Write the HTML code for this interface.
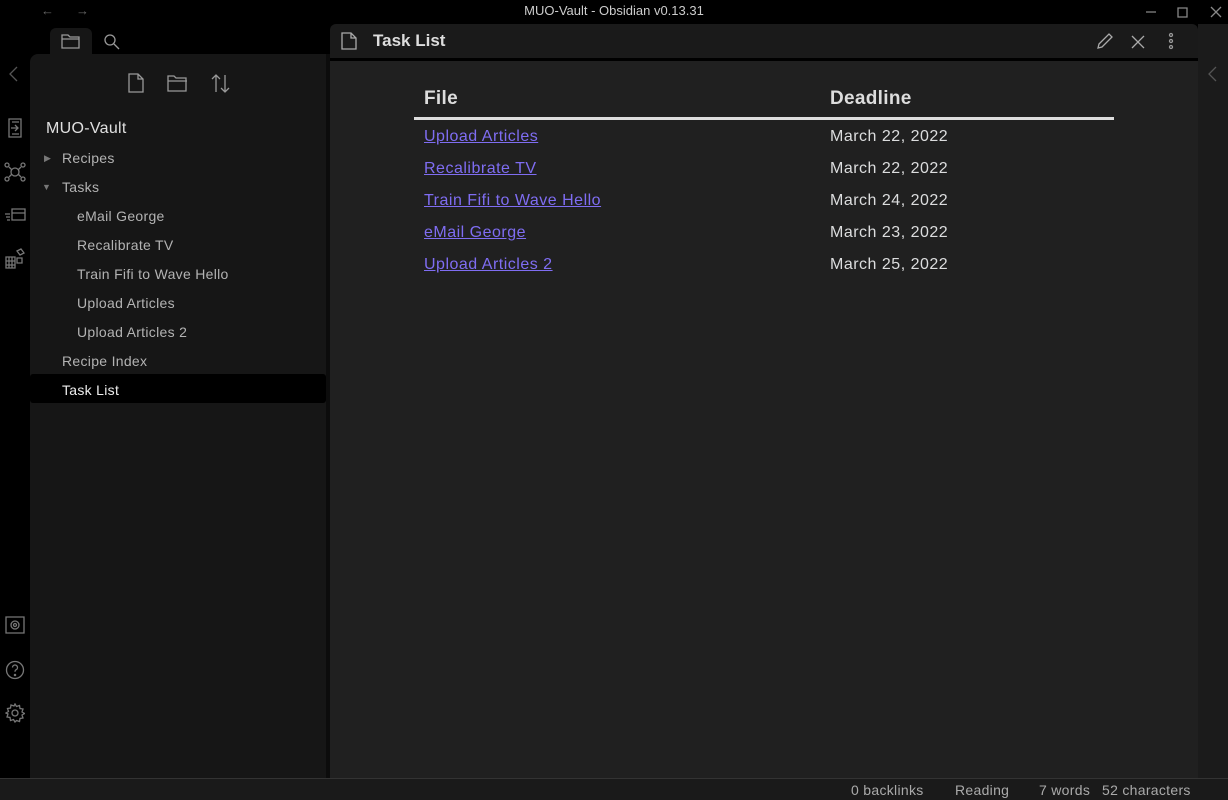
<!DOCTYPE html>
<html><head><meta charset="utf-8"><style>
*{margin:0;padding:0;box-sizing:border-box}
body{width:1228px;height:800px;background:#000;font-family:"Liberation Sans",sans-serif;position:relative;overflow:hidden;color:#dcddde}
.abs{position:absolute}
svg{position:absolute;fill:none;stroke:#999;stroke-width:1.3}
.rib{stroke:#777}
.t{position:absolute;font-size:14px;color:#b3b3b3;white-space:nowrap;letter-spacing:0.3px}
.main a{color:#7f6df2;text-decoration:underline}
.row{position:absolute;font-size:16px;white-space:nowrap;letter-spacing:0.5px}
</style></head><body>
<div class="abs" style="left:0;top:0;width:1228px;height:24px;background:#000"></div>
<div class="abs" style="left:0;top:3px;width:1228px;text-align:center;font-size:13px;color:#ccc">MUO-Vault - Obsidian v0.13.31</div>
<div class="abs" style="left:41px;top:3px;font-size:13px;color:#666">←</div>
<div class="abs" style="left:76px;top:3px;font-size:13px;color:#666">→</div>
<svg style="left:1146px;top:6px" width="82" height="14"><path d="M0 6h10M32 2h9v9h-9zM65 1l10 10M75 1l-10 10" stroke="#888"/></svg>
<div class="abs" style="left:50px;top:28px;width:42px;height:28px;background:#161616;border-radius:6px 6px 0 0"></div>
<svg style="left:61px;top:32px" width="20" height="18"><path d="M1 3h6l2 2h9v11H1z M1 7h17"/></svg>
<svg style="left:103px;top:33px" width="18" height="18"><circle cx="7" cy="7" r="5"/><path d="M11 11l5 5"/></svg>
<div class="abs" style="left:30px;top:54px;width:296px;height:724px;background:#161616;border-radius:8px 0 0 0"></div>
<div class="abs" style="left:326px;top:54px;width:4px;height:724px;background:#0c0c0c"></div>
<svg style="left:127px;top:73px" width="20" height="20"><path d="M2 1h9l5 5v13H2z M11 1v5h5"/></svg>
<svg style="left:167px;top:74px" width="22" height="18"><path d="M1 2h6l2 2h10v13H1z M1 7h19"/></svg>
<svg style="left:210px;top:73px" width="22" height="22"><path d="M6 19V2M2 6l4-4 4 4M15 2v17M11 15l4 4 4-4"/></svg>
<div class="abs" style="left:46px;top:120px;font-size:16px;color:#e0e0e0;letter-spacing:0.3px">MUO-Vault</div>
<div class="abs" style="left:44px;top:153px;font-size:9px;color:#777">▶</div>
<div class="t" style="left:62px;top:150px">Recipes</div>
<div class="abs" style="left:42px;top:182px;font-size:9px;color:#777">▼</div>
<div class="t" style="left:62px;top:179px">Tasks</div>
<div class="t" style="left:77px;top:208px">eMail George</div>
<div class="t" style="left:77px;top:237px">Recalibrate TV</div>
<div class="t" style="left:77px;top:266px">Train Fifi to Wave Hello</div>
<div class="t" style="left:77px;top:295px">Upload Articles</div>
<div class="t" style="left:77px;top:324px">Upload Articles 2</div>
<div class="t" style="left:62px;top:353px">Recipe Index</div>
<div class="abs" style="left:30px;top:374px;width:296px;height:29px;background:#000;border-radius:3px"></div>
<div class="t" style="left:62px;top:382px;color:#eee">Task List</div>
<svg class="rib" style="left:8px;top:66px" width="12" height="16"><path d="M9 1L2 8l7 7" stroke="#555"/></svg>
<svg class="rib" style="left:6px;top:118px" width="18" height="20"><path d="M3 1h12v18H3zM5 10h7M9 7l3 3-3 3M6 4h7M6 16h7"/></svg>
<svg class="rib" style="left:4px;top:161px" width="22" height="22"><circle cx="11" cy="11" r="4"/><circle cx="3" cy="4" r="2"/><circle cx="19" cy="4" r="2"/><circle cx="3" cy="18" r="2"/><circle cx="19" cy="18" r="2"/><path d="M5 6l3 3M17 6l-3 3M5 16l3-3M17 16l-3-3"/></svg>
<svg class="rib" style="left:4px;top:206px" width="22" height="18"><path d="M8 3h13v11H8zM8 7h13M1 8h5M2 11h4M3 14h3"/></svg>
<svg class="rib" style="left:5px;top:248px" width="22" height="22"><path d="M1 9h9v11H1zM1 13h9M1 17h9M4 9v11M7 9v11M12 3l4-2 3 4-4 2zM12 10h5v5h-5z"/></svg>
<svg class="rib" style="left:5px;top:616px" width="20" height="18"><path d="M1 1h18v16H1z"/><circle cx="10" cy="9" r="4"/><circle cx="10" cy="9" r="1.5"/></svg>
<svg class="rib" style="left:5px;top:660px" width="20" height="20"><circle cx="10" cy="10" r="8.5"/><path d="M7.5 7.5a2.5 2.5 0 1 1 3.5 2.3c-.8.4-1 1-1 2"/><circle cx="10" cy="15" r=".6"/></svg>
<svg class="rib" style="left:5px;top:703px" width="20" height="20"><circle cx="10" cy="10" r="3"/><path d="M10 1l1.5 2.5 3-1 .5 3 3 .5-1 3 2.5 1.5-2.5 1.5 1 3-3 .5-.5 3-3-1L10 19l-1.5-2.5-3 1-.5-3-3-.5 1-3L1 10l2.5-1.5-1-3 3-.5.5-3 3 1z"/></svg>
<div class="abs" style="left:330px;top:24px;width:868px;height:36px;background:#1a1a1a;border-radius:6px 6px 0 0"></div>
<div class="abs" style="left:330px;top:58px;width:868px;height:3px;background:#000"></div>
<div class="abs main" style="left:330px;top:61px;width:868px;height:717px;background:#202020"></div>
<div class="abs" style="left:1198px;top:24px;width:30px;height:754px;background:#1b1b1b"></div>
<svg style="left:1207px;top:66px" width="12" height="16"><path d="M9 1L2 8l7 7" stroke="#555"/></svg>
<svg style="left:341px;top:32px" width="16" height="18"><path d="M1 1h9l5 5v11H1z M10 1v5h5" stroke="#aaa"/></svg>
<div class="abs" style="left:373px;top:31px;font-size:17px;font-weight:bold;color:#ddd">Task List</div>
<svg style="left:1096px;top:32px" width="18" height="18"><path d="M2 16l1-4L13 2l3 3L6 15z" stroke="#aaa"/></svg>
<svg style="left:1131px;top:35px" width="14" height="14"><path d="M1 1l12 12M13 1L1 13" stroke="#aaa"/></svg>
<svg style="left:1167px;top:32px" width="8" height="18"><circle cx="4" cy="3" r="1.5"/><circle cx="4" cy="9" r="1.5"/><circle cx="4" cy="15" r="1.5"/></svg>
<div class="row" style="left:424px;top:88px;font-size:19px;font-weight:bold;color:#ddd;letter-spacing:0.3px">File</div>
<div class="row" style="left:830px;top:88px;font-size:19px;font-weight:bold;color:#ddd;letter-spacing:0.3px">Deadline</div>
<div class="abs" style="left:414px;top:117px;width:700px;height:3px;background:#ddd"></div>
<div class="row main" style="left:424px;top:128px"><a>Upload Articles</a></div>
<div class="row main" style="left:424px;top:160px"><a>Recalibrate TV</a></div>
<div class="row main" style="left:424px;top:192px"><a>Train Fifi to Wave Hello</a></div>
<div class="row main" style="left:424px;top:224px"><a>eMail George</a></div>
<div class="row main" style="left:424px;top:256px"><a>Upload Articles 2</a></div>
<div class="row" style="left:830px;top:128px">March 22, 2022</div>
<div class="row" style="left:830px;top:160px">March 22, 2022</div>
<div class="row" style="left:830px;top:192px">March 24, 2022</div>
<div class="row" style="left:830px;top:224px">March 23, 2022</div>
<div class="row" style="left:830px;top:256px">March 25, 2022</div>
<div class="abs" style="left:0;top:778px;width:1228px;height:22px;background:#1a1a1a;border-top:1px solid #333"></div>
<div class="abs" style="left:0;top:782px;width:1228px;font-size:14px;color:#aaa;white-space:nowrap;letter-spacing:0.3px">
<span class="abs" style="left:851px">0 backlinks</span>
<span class="abs" style="left:955px">Reading</span>
<span class="abs" style="left:1039px">7 words</span>
<span class="abs" style="left:1102px">52 characters</span>
</div>
</body></html>
